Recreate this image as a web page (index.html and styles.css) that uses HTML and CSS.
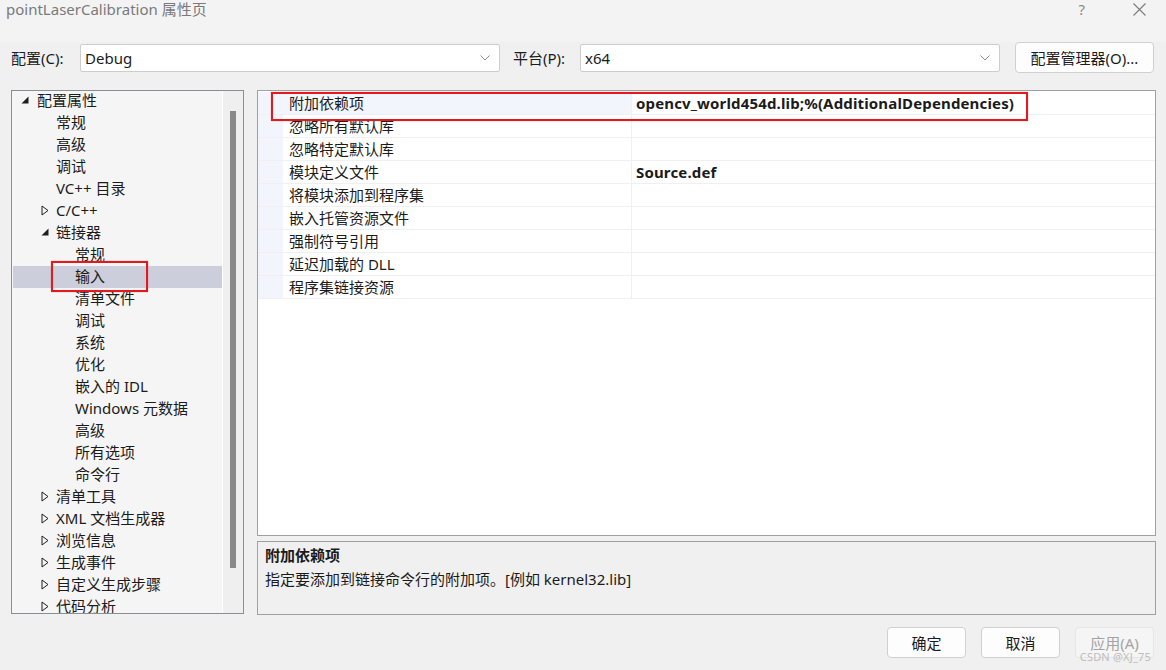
FILE: index.html
```html
<!DOCTYPE html>
<html lang="zh-CN">
<head>
<meta charset="utf-8">
<title>pointLaserCalibration 属性页</title>
<link rel="stylesheet" href="styles.css">
</head>
<body>
<div class="dialog">
  <div class="titlebar">
    <span class="title">pointLaserCalibration 属性页</span>
    <div class="title-actions">
      <span class="help">?</span>
      <svg class="close" width="13" height="13" viewBox="0 0 13 13"><path d="M0.5 0.5 L12.5 12.5 M12.5 0.5 L0.5 12.5" stroke="#7a7a7a" stroke-width="1.1" fill="none"/></svg>
    </div>
  </div>

  <div class="config-row">
    <span class="cfg-label">配置(C):</span>
    <div class="combo">
      <span>Debug</span>
      <svg class="chev" width="10" height="6" viewBox="0 0 10 6"><path d="M0.5 0.5 L5 5 L9.5 0.5" stroke="#8a8a8a" stroke-width="1" fill="none"/></svg>
    </div>
    <span class="cfg-label plat">平台(P):</span>
    <div class="combo">
      <span>x64</span>
      <svg class="chev" width="10" height="6" viewBox="0 0 10 6"><path d="M0.5 0.5 L5 5 L9.5 0.5" stroke="#8a8a8a" stroke-width="1" fill="none"/></svg>
    </div>
    <button class="btn mgr">配置管理器(O)...</button>
  </div>

  <div class="main">
    <div class="tree">
      <div class="tree-list">
        <div class="node l0"><span class="exp"><svg width="8" height="8" viewBox="0 0 8 8"><polygon points="7.5,0.5 7.5,7.5 0.5,7.5" fill="#1e1e1e"/></svg></span>配置属性</div>
        <div class="node l1"><span class="exp"></span>常规</div>
        <div class="node l1"><span class="exp"></span>高级</div>
        <div class="node l1"><span class="exp"></span>调试</div>
        <div class="node l1"><span class="exp"></span>VC++ 目录</div>
        <div class="node l1"><span class="exp"><svg width="8" height="11" viewBox="0 0 8 11"><polygon points="1,1 7,5.5 1,10" fill="none" stroke="#1e1e1e" stroke-width="1"/></svg></span>C/C++</div>
        <div class="node l1"><span class="exp"><svg width="8" height="8" viewBox="0 0 8 8"><polygon points="7.5,0.5 7.5,7.5 0.5,7.5" fill="#1e1e1e"/></svg></span>链接器</div>
        <div class="node l2"><span class="exp"></span>常规</div>
        <div class="node l2 selected"><span class="exp"></span>输入</div>
        <div class="node l2"><span class="exp"></span>清单文件</div>
        <div class="node l2"><span class="exp"></span>调试</div>
        <div class="node l2"><span class="exp"></span>系统</div>
        <div class="node l2"><span class="exp"></span>优化</div>
        <div class="node l2"><span class="exp"></span>嵌入的 IDL</div>
        <div class="node l2"><span class="exp"></span>Windows 元数据</div>
        <div class="node l2"><span class="exp"></span>高级</div>
        <div class="node l2"><span class="exp"></span>所有选项</div>
        <div class="node l2"><span class="exp"></span>命令行</div>
        <div class="node l1"><span class="exp"><svg width="8" height="11" viewBox="0 0 8 11"><polygon points="1,1 7,5.5 1,10" fill="none" stroke="#1e1e1e" stroke-width="1"/></svg></span>清单工具</div>
        <div class="node l1"><span class="exp"><svg width="8" height="11" viewBox="0 0 8 11"><polygon points="1,1 7,5.5 1,10" fill="none" stroke="#1e1e1e" stroke-width="1"/></svg></span>XML 文档生成器</div>
        <div class="node l1"><span class="exp"><svg width="8" height="11" viewBox="0 0 8 11"><polygon points="1,1 7,5.5 1,10" fill="none" stroke="#1e1e1e" stroke-width="1"/></svg></span>浏览信息</div>
        <div class="node l1"><span class="exp"><svg width="8" height="11" viewBox="0 0 8 11"><polygon points="1,1 7,5.5 1,10" fill="none" stroke="#1e1e1e" stroke-width="1"/></svg></span>生成事件</div>
        <div class="node l1"><span class="exp"><svg width="8" height="11" viewBox="0 0 8 11"><polygon points="1,1 7,5.5 1,10" fill="none" stroke="#1e1e1e" stroke-width="1"/></svg></span>自定义生成步骤</div>
        <div class="node l1"><span class="exp"><svg width="8" height="11" viewBox="0 0 8 11"><polygon points="1,1 7,5.5 1,10" fill="none" stroke="#1e1e1e" stroke-width="1"/></svg></span>代码分析</div>
      </div>
      <div class="vscroll"><div class="thumb"></div></div>
      <div class="mark mark-tree"></div>
    </div>

    <div class="right">
      <div class="grid">
        <div class="prow sel"><span class="margin"></span><span class="pname">附加依赖项</span><span class="pval">opencv_world454d.lib;%(AdditionalDependencies)</span></div>
        <div class="prow"><span class="margin"></span><span class="pname">忽略所有默认库</span><span class="pval"></span></div>
        <div class="prow"><span class="margin"></span><span class="pname">忽略特定默认库</span><span class="pval"></span></div>
        <div class="prow"><span class="margin"></span><span class="pname">模块定义文件</span><span class="pval">Source.def</span></div>
        <div class="prow"><span class="margin"></span><span class="pname">将模块添加到程序集</span><span class="pval"></span></div>
        <div class="prow"><span class="margin"></span><span class="pname">嵌入托管资源文件</span><span class="pval"></span></div>
        <div class="prow"><span class="margin"></span><span class="pname">强制符号引用</span><span class="pval"></span></div>
        <div class="prow"><span class="margin"></span><span class="pname">延迟加载的 DLL</span><span class="pval"></span></div>
        <div class="prow"><span class="margin"></span><span class="pname">程序集链接资源</span><span class="pval"></span></div>
        <div class="mark mark-grid"></div>
      </div>
      <div class="desc">
        <div class="desc-title">附加依赖项</div>
        <div class="desc-text">指定要添加到链接命令行的附加项。[例如 kernel32.lib]</div>
      </div>
    </div>
  </div>

  <div class="buttons">
    <button class="btn act">确定</button>
    <button class="btn act">取消</button>
    <button class="btn act disabled">应用(A)</button>
  </div>
  <div class="watermark">CSDN @XJ_75</div>
</div>
</body>
</html>
```

FILE: styles.css
```css
* { box-sizing: border-box; }
html, body { margin: 0; padding: 0; }
body {
  width: 1166px;
  height: 670px;
  overflow: hidden;
  background: #f0f0f0;
  font-family: "Noto Sans", "Noto Sans CJK SC", sans-serif;
  font-size: 15px;
  color: #1b1b1b;
}
.dialog {
  position: relative;
  width: 1166px;
  height: 670px;
  display: flex;
  flex-direction: column;
}
.titlebar {
  height: 42px;
  display: flex;
  justify-content: space-between;
  align-items: flex-start;
  padding: 0 20px 0 6px;
  background: #f3f3f3;
}
.title {
  color: #7a7a7a;
  font-size: 15px;
  line-height: 19px;
}
.title-actions {
  display: flex;
  align-items: center;
  gap: 48px;
  padding-top: 3px;
}
.help {
  color: #8a8a8a;
  font-size: 15px;
  line-height: 13px;
}
.config-row {
  display: flex;
  align-items: center;
  height: 31px;
  padding-left: 11px;
  margin-bottom: 17px;
}
.cfg-label {
  width: 69px;
  line-height: 20px;
}
.cfg-label.plat {
  width: 67px;
  margin-left: 13px;
}
.combo {
  width: 420px;
  height: 28px;
  background: #ffffff;
  border: 1px solid #cdcdcd;
  border-radius: 2px;
  display: flex;
  align-items: center;
  justify-content: space-between;
  padding: 0 9px 0 4px;
  line-height: 20px;
}
.chev { display: block; }
.btn {
  font-family: inherit;
  font-size: 15px;
  color: #1b1b1b;
  background: #fdfdfd;
  border: 1px solid #d0d0d0;
  border-radius: 4px;
  height: 31px;
  padding: 0;
  line-height: 20px;
}
.mgr {
  width: 139px;
  margin-left: 15px;
}
.main {
  display: flex;
  padding-left: 11px;
  height: 525px;
}
.tree {
  position: relative;
  width: 233px;
  height: 524px;
  border: 1px solid #8b8e95;
  background: #f5f5f5;
  display: flex;
  overflow: hidden;
}
.tree-list {
  flex: 1;
  padding-left: 1px;
  margin-top: -1px;
  border-right: 1px solid #ffffff;
}
.node {
  height: 22px;
  line-height: 20px;
  padding-bottom: 2px;
  display: flex;
  align-items: center;
  white-space: nowrap;
}
.node .exp {
  height: 20px;
  display: flex;
  align-items: center;
  justify-content: flex-start;
}
.node.l0 { padding-left: 8px; }
.node.l0 .exp { width: 16px; }
.node.l1 { padding-left: 28px; }
.node.l1 .exp { width: 15px; }
.node.l2 { padding-left: 47px; }
.node.l2 .exp { width: 15px; }
.node.selected { background: #cccedb; }
.vscroll {
  width: 20px;
  background: #efefef;
  padding: 20px 0 0 7px;
}
.thumb {
  width: 6px;
  height: 457px;
  background: #898989;
}
.mark {
  position: absolute;
  border: 2px solid #e3191f;
  box-shadow: 0 0 1px rgba(227, 25, 31, 0.5);
}
.mark-tree {
  left: 39px;
  top: 170px;
  width: 97px;
  height: 31px;
}
.right {
  margin-left: 13px;
  width: 899px;
  display: flex;
  flex-direction: column;
  gap: 5px;
}
.grid {
  position: relative;
  height: 446px;
  background: #ffffff;
  border: 1px solid #a0a0a0;
  padding-top: 1px;
}
.prow {
  display: flex;
  height: 23px;
  border-bottom: 1px solid #f0f0f4;
  line-height: 22px;
}
.margin {
  width: 25px;
  background: #f2f5fb;
}
.pname {
  width: 349px;
  padding-left: 6px;
  border-right: 1px solid #f0f0f4;
  white-space: nowrap;
}
.prow.sel .pname { background: #f2f5fb; }
.pval {
  flex: 1;
  padding-left: 4px;
  font-weight: 700;
  white-space: nowrap;
  letter-spacing: 0.15px;
}
.mark-grid {
  left: 13px;
  top: 1px;
  width: 757px;
  height: 29px;
}
.desc {
  height: 74px;
  border: 1px solid #a0a0a0;
  background: #f0f0f0;
  padding: 2px 7px;
}
.desc-title {
  font-weight: 700;
  line-height: 23px;
}
.desc-text {
  line-height: 24px;
}
.buttons {
  display: flex;
  justify-content: flex-end;
  gap: 15px;
  padding: 12px 12px 0 0;
}
.act { width: 79px; }
.btn.disabled {
  color: #a3a3a3;
  background: #f5f5f5;
  border-color: #e6e6e6;
}
.watermark {
  position: absolute;
  right: 15px;
  bottom: 7px;
  font-size: 11px;
  color: #bdbdbd;
  line-height: 13px;
  letter-spacing: 0.2px;
}
```
